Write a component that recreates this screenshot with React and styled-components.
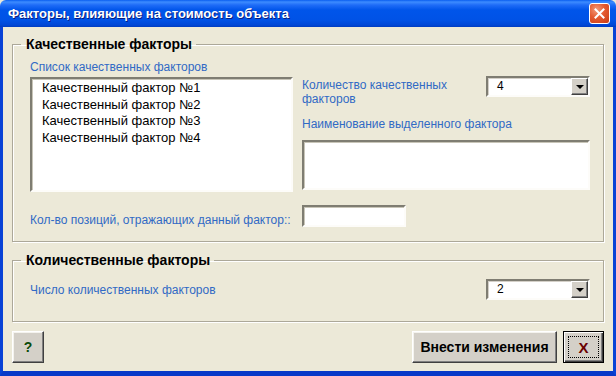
import React from "react";
import styled, { createGlobalStyle } from "styled-components";

const GlobalStyle = createGlobalStyle`
  * { box-sizing: border-box; }
  body {
    margin: 0;
    background: #ece9d8;
    font-family: "Liberation Sans", Arial, sans-serif;
  }
`;

const Window = styled.div`
  width: 616px;
  height: 376px;
  display: flex;
  flex-direction: column;
  overflow: hidden;
`;

const TitleBar = styled.div`
  height: 27px;
  flex: none;
  display: flex;
  align-items: center;
  justify-content: space-between;
  padding: 0 6px 0 8px;
  background: linear-gradient(
    to bottom,
    #0a5ef0 0px,
    #3d8cff 2px,
    #1f6cf7 5px,
    #0055ea 10px,
    #0052e6 20px,
    #0047d6 25px,
    #003cc0 27px
  );
  border-radius: 6px 6px 0 0;
`;

const Title = styled.span`
  color: #fff;
  font-weight: bold;
  font-size: 13px;
  text-shadow: 1px 1px 0 #0a1e80;
`;

const CloseBox = styled.div`
  width: 21px;
  height: 21px;
  border: 1px solid #fff;
  border-radius: 3px;
  background: radial-gradient(circle at 35% 30%, #f29a7a 0%, #e45a30 45%, #c83b14 100%);
  display: flex;
  align-items: center;
  justify-content: center;
`;

const Frame = styled.div`
  flex: 1;
  display: flex;
  border-left: 3px solid #0842d6;
  border-right: 4px solid #0843d6;
  border-bottom: 5px solid #0839c8;
  box-shadow: inset -1px 0 0 #2a5fe0;
`;

const Body = styled.div`
  flex: 1;
  background: #ece9d8;
  padding: 9px 9px 0 9px;
  display: flex;
  flex-direction: column;
`;

const Group = styled.fieldset`
  margin: 0 0 ${(p) => p.$gap || 0}px 0;
  height: ${(p) => p.$h}px;
  border: 1px solid #aca899;
  box-shadow: inset 1px 1px 0 #fff, 1px 1px 0 #fff;
  padding: ${(p) => p.$pt}px 13px 0 17px;
  min-width: 0;
`;

const Legend = styled.legend`
  font-weight: bold;
  font-size: 14px;
  line-height: 16px;
  color: #000;
  padding: 0 4px 0 5px;
  margin-left: -9px;
`;

const QualityGrid = styled.div`
  display: grid;
  grid-template-columns: 263px 288px;
  column-gap: 9px;
`;

const Label = styled.div`
  color: #316ac5;
  font-size: 12px;
  line-height: 14px;
`;

const LeftColumn = styled.div`
  display: flex;
  flex-direction: column;
`;

const ListBox = styled.div`
  margin-top: 3px;
  height: 115px;
  background: #fff;
  border: 2px solid;
  border-color: #7f7d72 #fdfcf9 #fdfcf9 #7f7d72;
  box-shadow: inset 1px 1px 0 #c8c5b8;
  padding: 1px 0 0 10px;
`;

const ListItem = styled.div`
  font-size: 13px;
  line-height: 16.6px;
  color: #000;
`;

const RightColumn = styled.div`
  display: flex;
  flex-direction: column;
  padding-top: 16px;
`;

const QtyRow = styled.div`
  display: flex;
  justify-content: space-between;
  align-items: flex-start;
  height: 30px;
`;

const WrapLabel = styled(Label)`
  width: 160px;
  padding-top: 2px;
`;

const Combo = styled.div`
  width: 104px;
  height: ${(p) => p.$h || 21}px;
  margin-top: ${(p) => p.$mt || 0}px;
  display: flex;
  background: #fff;
  border: 2px solid;
  border-color: #7f7d72 #fdfcf9 #fdfcf9 #7f7d72;
  box-shadow: inset 1px 1px 0 #d4d0c8;
`;

const ComboValue = styled.span`
  flex: 1;
  font-size: 12px;
  line-height: 15px;
  padding: 1px 0 0 9px;
  color: #000;
`;

const DropButton = styled.div`
  width: 17px;
  background: #d4d0c8;
  border: 1px solid;
  border-color: #fff #404040 #404040 #fff;
  box-shadow: inset -1px -1px 0 #808080;
  display: flex;
  align-items: center;
  justify-content: center;
`;

const Arrow = styled.span`
  width: 0;
  height: 0;
  border-left: 4px solid transparent;
  border-right: 4px solid transparent;
  border-top: 4px solid #000;
`;

const NameLabel = styled(Label)`
  margin-top: 11px;
`;

const TextBox = styled.div`
  margin-top: 9px;
  height: 50px;
  background: #fff;
  border: 2px solid;
  border-color: #7f7d72 #fdfcf9 #fdfcf9 #7f7d72;
  box-shadow: inset 1px 1px 0 #c8c5b8;
`;

const PositionsRow = styled.div`
  grid-column: 1 / 3;
  display: grid;
  grid-template-columns: 263px 104px;
  column-gap: 9px;
  margin-top: 13px;
  align-items: end;
`;

const SmallInput = styled.div`
  height: 22px;
  background: #fff;
  border: 2px solid;
  border-color: #7f7d72 #fdfcf9 #fdfcf9 #7f7d72;
  box-shadow: inset 1px 1px 0 #c8c5b8;
`;

const CountRow = styled.div`
  display: flex;
  justify-content: space-between;
  align-items: center;
`;

const ButtonBar = styled.div`
  margin-top: 9px;
  display: flex;
  align-items: flex-start;
  gap: 6px;
`;

const Button = styled.button`
  width: ${(p) => p.$w}px;
  height: 32px;
  margin: 0;
  margin-right: ${(p) => (p.$push ? "auto" : "0")};
  padding: 0;
  background: #d4d0c8;
  border: 1px solid;
  border-color: #fff #404040 #404040 #fff;
  box-shadow: inset -1px -1px 0 #808080, inset 1px 1px 0 #f4f3ee;
  font-family: "Liberation Sans", Arial, sans-serif;
  font-weight: bold;
  font-size: 14px;
  color: ${(p) => p.$color || "#000"};
  cursor: default;
`;

const DefaultButton = styled(Button)`
  border: 1px solid #000;
  box-shadow: inset 1px 1px 0 #fff, inset -1px -1px 0 #404040, inset -2px -2px 0 #808080;
  position: relative;
  font-size: 15px;
  &::after {
    content: "";
    position: absolute;
    inset: 4px;
    border: 1px dotted #000;
  }
`;

function Dropdown({ value, mt }) {
  return (
    <Combo $mt={mt}>
      <ComboValue>{value}</ComboValue>
      <DropButton>
        <Arrow />
      </DropButton>
    </Combo>
  );
}

const factors = [
  "Качественный фактор №1",
  "Качественный фактор №2",
  "Качественный фактор №3",
  "Качественный фактор №4",
];

export default function App() {
  return (
    <>
      <GlobalStyle />
      <Window>
        <TitleBar>
          <Title>Факторы, влияющие на стоимость объекта</Title>
          <CloseBox>
            <svg width="11" height="11" viewBox="0 0 11 11">
              <path d="M1.5 1.5 L9.5 9.5 M9.5 1.5 L1.5 9.5" stroke="#fff" strokeWidth="2" strokeLinecap="square" />
            </svg>
          </CloseBox>
        </TitleBar>
        <Frame>
          <Body>
            <Group $h={206} $pt={8} $gap={10}>
              <Legend>Качественные факторы</Legend>
              <QualityGrid>
                <LeftColumn>
                  <Label>Список качественных факторов</Label>
                  <ListBox>
                    {factors.map((f) => (
                      <ListItem key={f}>{f}</ListItem>
                    ))}
                  </ListBox>
                </LeftColumn>
                <RightColumn>
                  <QtyRow>
                    <WrapLabel>Количество качественных факторов</WrapLabel>
                    <Dropdown value="4" />
                  </QtyRow>
                  <NameLabel>Наименование выделенного фактора</NameLabel>
                  <TextBox />
                </RightColumn>
                <PositionsRow>
                  <Label>Кол-во позиций, отражающих данный фактор::</Label>
                  <SmallInput />
                </PositionsRow>
              </QualityGrid>
            </Group>
            <Group $h={70} $pt={11}>
              <Legend>Количественные факторы</Legend>
              <CountRow>
                <Label>Число количественных факторов</Label>
                <Dropdown value="2" />
              </CountRow>
            </Group>
            <ButtonBar>
              <Button $w={32} $push $color="#0a4a0a">?</Button>
              <Button $w={145}>Внести изменения</Button>
              <DefaultButton $w={41} $color="#6b0000">X</DefaultButton>
            </ButtonBar>
          </Body>
        </Frame>
      </Window>
    </>
  );
}
